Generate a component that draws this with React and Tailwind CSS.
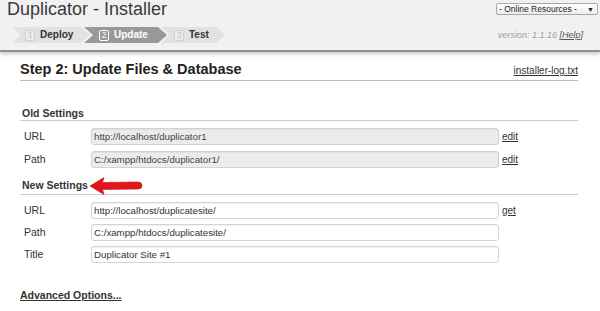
function Step({ n, label, active, width, first }) {
  return (
    <div
      className={
        "h-[16px] flex items-center gap-[5px] [clip-path:polygon(0_0,calc(100%_-_9px)_0,100%_50%,calc(100%_-_9px)_100%,0_100%,9px_50%)] " +
        (active ? "bg-[#999999] pl-[15px]" : "bg-[#e2e2e2] pl-[13px]") +
        (first ? "" : " -ml-[6px]")
      }
      style={{ width }}
    >
      <span
        className={
          "w-[10px] h-[11px] flex items-center justify-center rounded-[2px] border text-[8.5px] leading-none " +
          (active
            ? "border-white text-white bg-[#999999]"
            : "border-[#cfcfcf] text-[#c4c4c4] bg-[#ededed]")
        }
      >
        {n}
      </span>
      <span
        className={
          "text-[10px] leading-none font-bold " +
          (active ? "text-white" : "text-[#333]")
        }
      >
        {label}
      </span>
    </div>
  );
}

function Row({ label, value, link, disabled, first }) {
  return (
    <div className={"flex items-center h-[17px] " + (first ? "" : "mt-[5px]")}>
      <div className="w-[71px] pl-[4px] text-[10.5px] leading-none text-[#333]">
        {label}
      </div>
      <input
        readOnly
        defaultValue={value}
        className={
          "w-[408px] h-[17px] rounded-[3px] border pl-[2px] text-[9.7px] leading-none outline-none shadow-[inset_0_1px_1px_rgba(0,0,0,0.06)] " +
          (disabled
            ? "bg-[#ececec] border-[#d2d2d2] text-[#444]"
            : "bg-white border-[#d4d4d4] text-[#333]")
        }
      />
      {link && (
        <a className="ml-[3px] text-[10px] leading-none underline text-[#333]">
          {link}
        </a>
      )}
    </div>
  );
}

export default function App() {
  return (
    <div className="relative w-[600px] h-[311px] overflow-hidden bg-white text-[#333] font-['Liberation_Sans',Arial,sans-serif]">
      <header className="h-[52px] bg-[#f1f1f1] border-b-2 border-[#8f8f8f] shadow-[0_2px_4px_rgba(0,0,0,0.22)]">
        <div className="flex justify-between">
          <h1 className="ml-[7px] text-[18px] leading-[18px] font-normal text-[#3a3a3a]">
            Duplicator - Installer
          </h1>
          <div className="mt-[3px] mr-[2px] h-[12px] w-[102px] flex items-center justify-between rounded-[2px] border border-[#a9a9a9] bg-gradient-to-b from-white to-[#ececec] pl-[2px] pr-[3px]">
            <span className="text-[8.5px] leading-none text-[#222]">
              - Online Resources -
            </span>
            <span className="text-[7px] leading-none text-[#222]">▼</span>
          </div>
        </div>
        <div className="mt-[9px] flex justify-between items-center h-[16px]">
          <div className="ml-[12px] flex">
            <Step n="1" label="Deploy" width="78px" first />
            <Step n="2" label="Update" width="83px" active />
            <Step n="3" label="Test" width="64px" />
          </div>
          <div className="mr-[17px] text-[9px] leading-[11px] italic">
            <span className="text-[#a0a0a0]">version: 1.1.16 </span>
            <a className="underline text-[#555]">[Help]</a>
          </div>
        </div>
      </header>

      <main className="ml-[20px] w-[558px]">
        <div className="mt-[9px] flex justify-between items-baseline border-b border-[#bbbbbb] pb-[3px]">
          <h2 className="text-[14.5px] leading-[16px] font-bold text-[#222]">
            Step 2: Update Files &amp; Database
          </h2>
          <a className="text-[10px] leading-none underline text-[#333]">
            installer-log.txt
          </a>
        </div>

        <div className="mt-[26px] pl-[2px] pb-[1px] border-b border-[#cccccc] text-[10.5px] leading-[12px] font-bold text-[#333]">
          Old Settings
        </div>
        <div className="mt-[7px]">
          <Row first label="URL" value="http://localhost/duplicator1" link="edit" disabled />
          <div className="mt-[6px]" />
          <Row first label="Path" value="C:/xampp/htdocs/duplicator1/" link="edit" disabled />
        </div>

        <div className="relative mt-[11px] pl-[2px] pb-[3px] border-b border-[#cccccc] text-[10.5px] leading-[12px] font-bold text-[#333]">
          New Settings
          <svg
            className="absolute left-[69px] top-[-2px]"
            width="54"
            height="18"
            viewBox="0 0 54 18"
          >
            <path
              d="M1 9 L15 0.5 L13.5 5.5 L49 5 Q53 5 53 8.5 Q53 12 49 12 L13.5 12.5 L15 17.5 Z"
              fill="#e3141b"
              stroke="#b80f14"
              strokeWidth="0.6"
            />
          </svg>
        </div>
        <div className="mt-[7px]">
          <Row first label="URL" value="http://localhost/duplicatesite/" link="get" />
          <Row label="Path" value="C:/xampp/htdocs/duplicatesite/" />
          <Row label="Title" value="Duplicator Site #1" />
        </div>

        <a className="block mt-[26px] text-[10.5px] leading-[12px] font-bold underline text-[#333]">
          Advanced Options...
        </a>
      </main>
    </div>
  );
}
